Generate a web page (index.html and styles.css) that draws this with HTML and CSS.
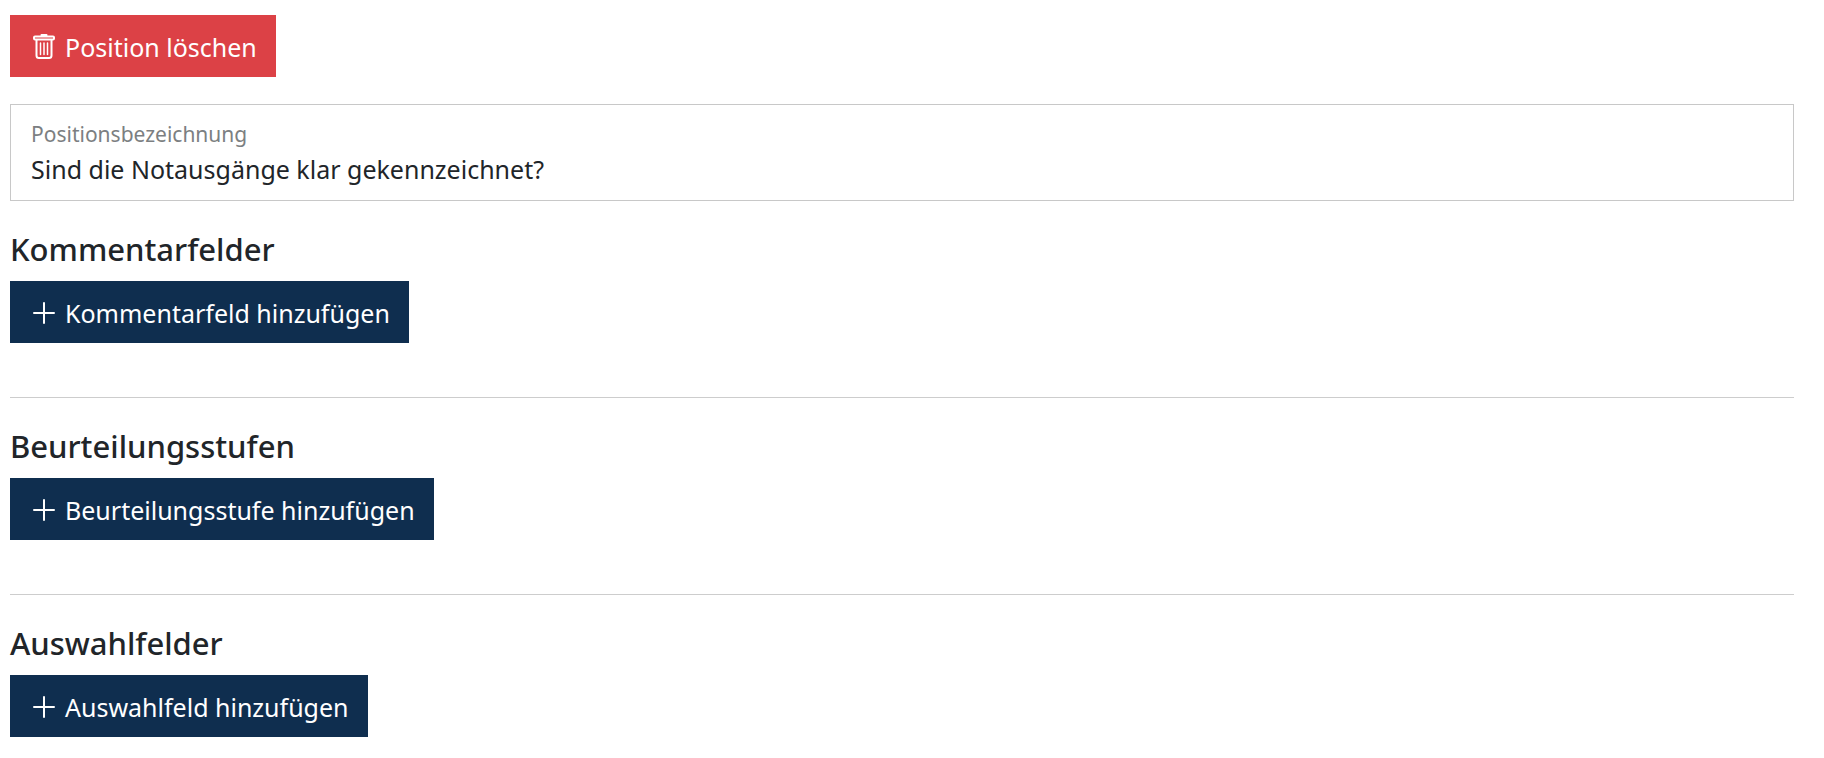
FILE: index.html
```
<!DOCTYPE html>
<html lang="de">

<head>
    <meta charset="UTF-8">
    <meta name="viewport" content="width=device-width, initial-scale=1.0">
    <title>Position bearbeiten</title>
    <link rel="stylesheet" href="styles.css">
</head>

<body>
    <form>
        <button type="button" class="btn btn-danger">
            <svg class="icon" viewBox="0 0 26 26" aria-hidden="true">
                <path d="M10.500 1h5M4 2.500h18q1 0 1 1v1q0 1-1 1H4q-1 0-1-1v-1q0-1 1-1zM5.500 5.500v16q0 2.500 2.500 2.500h10q2.500 0 2.500-2.500v-16" />
                <path class="thin" d="M9.500 9v11.500M13 9v11.500M16.500 9v11.500" />
            </svg>
            Position löschen
        </button>

        <div class="field">
            <label for="bezeichnung">Positionsbezeichnung</label>
            <input type="text" id="bezeichnung" name="bezeichnung" value="Sind die Notausgänge klar gekennzeichnet?">
        </div>

        <section>
            <h2>Kommentarfelder</h2>
            <button type="button" class="btn btn-primary">
                <svg class="icon" viewBox="0 0 26 26" aria-hidden="true">
                    <path d="M13 3v20M3 13h20" />
                </svg>
                Kommentarfeld hinzufügen
            </button>
        </section>
        <hr>

        <section>
            <h2>Beurteilungsstufen</h2>
            <button type="button" class="btn btn-primary">
                <svg class="icon" viewBox="0 0 26 26" aria-hidden="true">
                    <path d="M13 3v20M3 13h20" />
                </svg>
                Beurteilungsstufe hinzufügen
            </button>
        </section>
        <hr>

        <section>
            <h2>Auswahlfelder</h2>
            <button type="button" class="btn btn-primary">
                <svg class="icon" viewBox="0 0 26 26" aria-hidden="true">
                    <path d="M13 3v20M3 13h20" />
                </svg>
                Auswahlfeld hinzufügen
            </button>
        </section>
    </form>
</body>

</html>
```
FILE: styles.css
```
* {
    box-sizing: border-box;
}

body {
    margin: 0;
    padding: 15px 30px 20px 10px;
    font-family: "Segoe UI", "Noto Sans", sans-serif;
    font-size: 25px;
    color: #212529;
    background: #fff;
}

.btn {
    display: flex;
    align-items: center;
    gap: 8px;
    height: 62px;
    padding: 2px 19px 0 21px;
    border: 0;
    font: inherit;
    color: #fff;
    cursor: pointer;
}

.btn:hover {
    opacity: 0.9;
}

.btn-danger {
    background: #dc4146;
}

.btn-primary {
    background: #0f2e4f;
}

.icon {
    width: 26px;
    height: 26px;
    fill: none;
    stroke: currentColor;
    stroke-width: 2;
    stroke-linecap: round;
}

.icon .thin {
    stroke-width: 1.5;
}

.field {
    display: flex;
    flex-direction: column;
    margin-top: 27px;
    padding: 13px 20px 14px;
    border: 1px solid #c8c8c8;
}

.field label {
    font-size: 21px;
    line-height: 33px;
    color: #7c7f82;
}

.field input {
    width: 100%;
    height: 35px;
    padding: 0;
    border: 0;
    outline: 0;
    font: inherit;
    color: inherit;
    background: none;
}

h2 {
    margin: 28px 0 11px;
    font-size: 31px;
    font-weight: 500;
    line-height: 41px;
}

hr {
    margin: 54px 0 0;
    border: 0;
    border-top: 1px solid #cdcdcd;
}
```
